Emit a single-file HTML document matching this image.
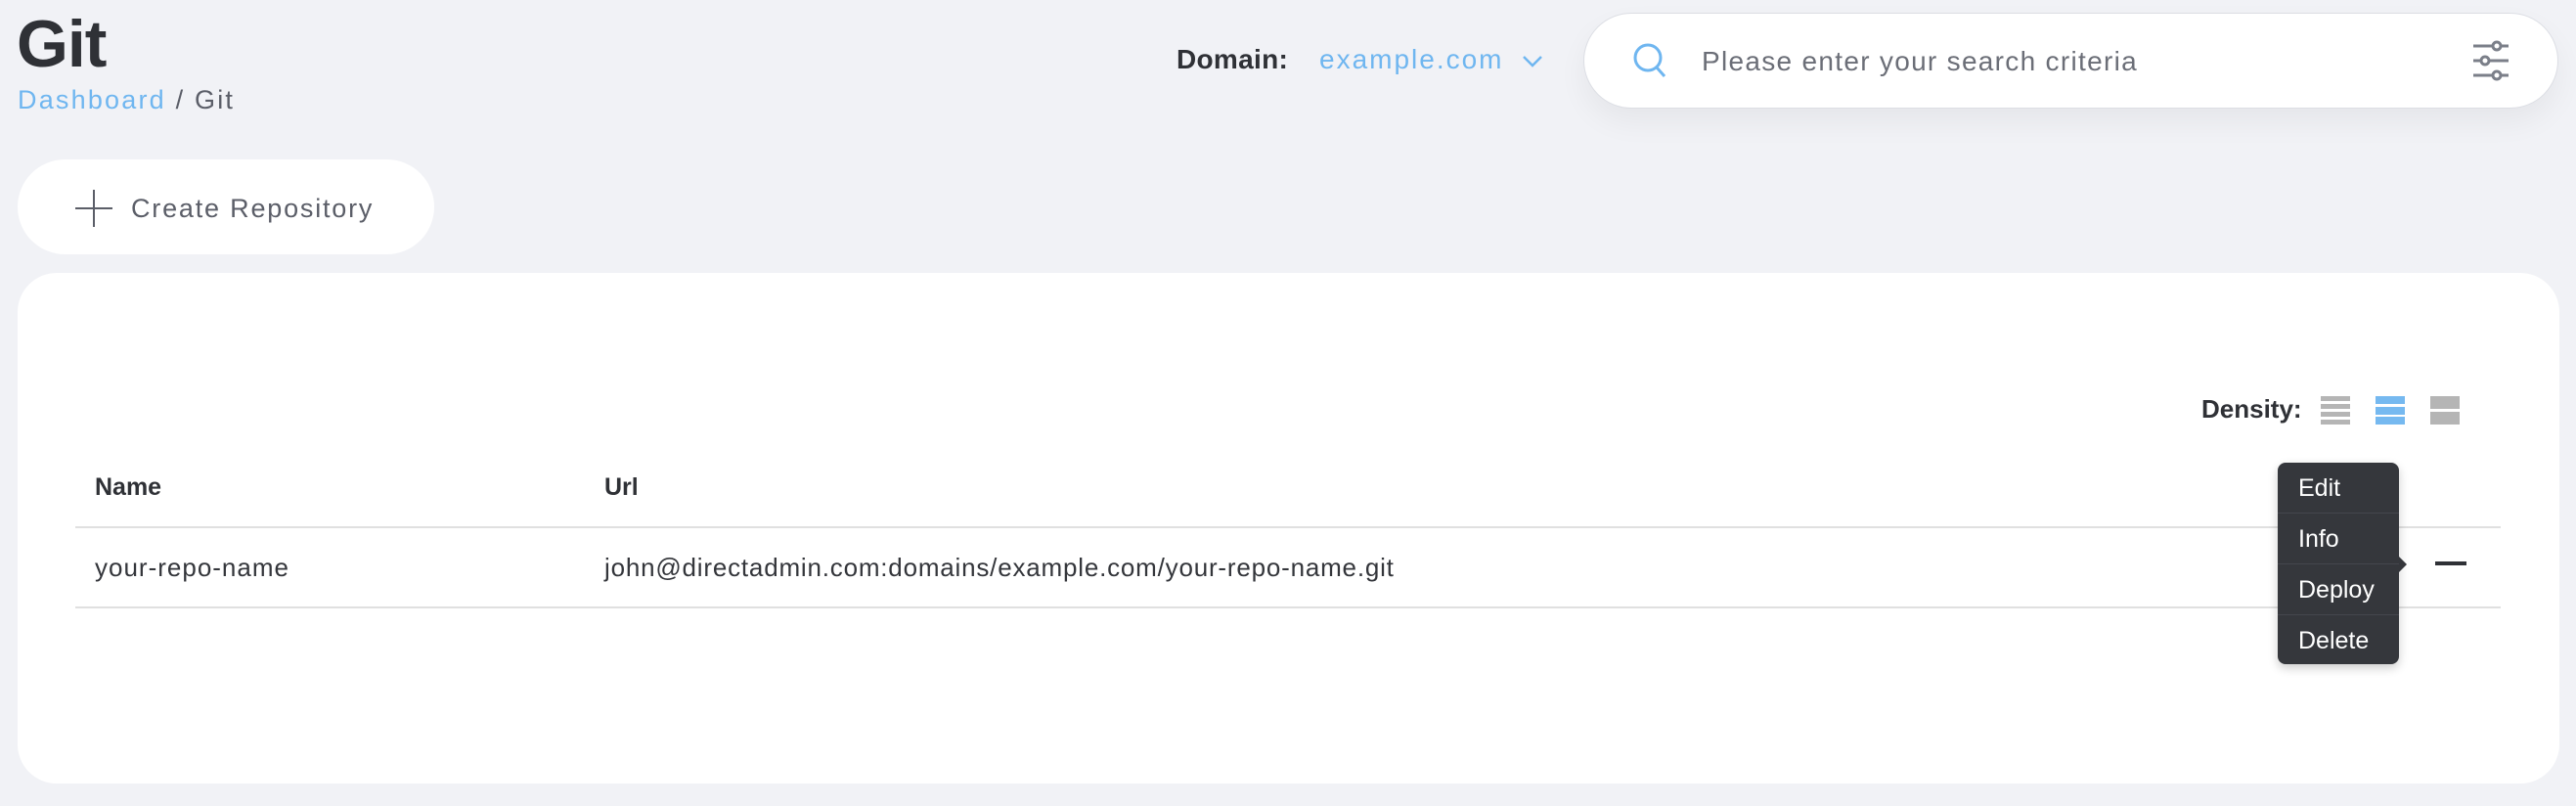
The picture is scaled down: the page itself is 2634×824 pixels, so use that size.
<!DOCTYPE html>
<html><head><meta charset="utf-8"><style>
*{margin:0;padding:0;box-sizing:border-box}
body{width:2634px;height:824px;background:#f1f2f6;font-family:"Liberation Sans",sans-serif;position:relative;overflow:hidden;color:#34363b}
.a{position:absolute;white-space:nowrap}
</style></head><body>
<div class="a" style="left:17px;top:6px;font-size:68px;font-weight:bold;color:#2f3136;letter-spacing:-1px">Git</div>
<div class="a" style="left:18px;top:87px;font-size:27px;letter-spacing:2.2px;color:#5b5e68"><span style="color:#6fb6f0">Dashboard</span> / Git</div>

<div class="a" style="left:1203px;top:45px;font-size:28px;font-weight:bold;color:#2f3136;letter-spacing:0.3px">Domain:</div>
<div class="a" style="left:1349px;top:45px;font-size:28px;color:#6fb6f0;letter-spacing:2px">example.com</div>
<svg class="a" style="left:1556px;top:56px" width="22" height="14" viewBox="0 0 22 14"><path d="M2 2l9 9 9-9" fill="none" stroke="#6fb6f0" stroke-width="2.5"/></svg>

<div class="a" style="left:1619px;top:13px;width:997px;height:98px;background:#fff;border-radius:49px;border:1px solid #dcdee4;box-shadow:0 14px 30px rgba(0,0,0,0.05)"></div>
<svg class="a" style="left:1668px;top:42px" width="38" height="40" viewBox="0 0 38 40"><circle cx="17" cy="17" r="13" fill="none" stroke="#6fb6f0" stroke-width="3"/><path d="M26 27l8 9" stroke="#6fb6f0" stroke-width="3"/></svg>
<div class="a" style="left:1740px;top:47px;font-size:28px;color:#6b6e77;letter-spacing:1.3px">Please enter your search criteria</div>
<svg class="a" style="left:2527px;top:41px" width="40" height="42" viewBox="0 0 40 42"><g stroke="#7b7f89" stroke-width="3" fill="#fff"><path d="M2 6h36M2 21h36M2 36h36"/><circle cx="26" cy="6" r="4"/><circle cx="14" cy="21" r="4"/><circle cx="26" cy="36" r="4"/></g></svg>

<div class="a" style="left:18px;top:163px;width:426px;height:97px;background:#fff;border-radius:49px"></div>
<svg class="a" style="left:77px;top:194px" width="38" height="38"><path d="M19 0v38M0 19h38" stroke="#5b5e68" stroke-width="2"/></svg>
<div class="a" style="left:134px;top:198px;font-size:27px;color:#5b5e68;letter-spacing:1.8px">Create Repository</div>

<div class="a" style="left:18px;top:279px;width:2599px;height:522px;background:#fff;border-radius:40px"></div>
<div class="a" style="left:2251px;top:403px;font-size:26px;font-weight:bold;color:#2f3136">Density:</div>
<svg class="a" style="left:2373px;top:404px" width="160" height="32">
<g fill="#b5b5b5"><rect x="0" y="1" width="30" height="5"/><rect x="0" y="9" width="30" height="5"/><rect x="0" y="17" width="30" height="5"/><rect x="0" y="25" width="30" height="5"/></g>
<g fill="#76b9f0"><rect x="56" y="1" width="30" height="8"/><rect x="56" y="12" width="30" height="8"/><rect x="56" y="22" width="30" height="8"/></g>
<g fill="#b5b5b5"><rect x="112" y="1" width="30" height="13"/><rect x="112" y="17" width="30" height="13"/></g></svg>

<div class="a" style="left:97px;top:484px;font-size:25px;font-weight:bold;color:#2f3136">Name</div>
<div class="a" style="left:618px;top:484px;font-size:25px;font-weight:bold;color:#2f3136">Url</div>
<div class="a" style="left:77px;top:538px;width:2480px;height:2px;background:#e0e0e0"></div>
<div class="a" style="left:97px;top:565px;font-size:26px;color:#34363b;letter-spacing:1px">your-repo-name</div>
<div class="a" style="left:618px;top:565px;font-size:26px;color:#34363b;letter-spacing:0.8px">john@directadmin.com:domains/example.com/your-repo-name.git</div>
<div class="a" style="left:77px;top:620px;width:2480px;height:2px;background:#e0e0e0"></div>
<div class="a" style="left:2490px;top:574px;width:32px;height:4px;background:#2f3136"></div>

<div class="a" style="left:2329px;top:473px;width:124px;height:206px;background:#35373c;border-radius:8px;box-shadow:0 4px 10px rgba(0,0,0,0.2)"></div>
<div class="a" style="left:2451px;top:567px;width:0;height:0;border-top:10px solid transparent;border-bottom:10px solid transparent;border-left:10px solid #35373c"></div>
<div class="a" style="left:2329px;top:524px;width:124px;height:1px;background:#44474d"></div>
<div class="a" style="left:2329px;top:576px;width:124px;height:1px;background:#44474d"></div>
<div class="a" style="left:2329px;top:628px;width:124px;height:1px;background:#44474d"></div>
<div class="a" style="left:2350px;top:485px;font-size:25px;color:#fff">Edit</div>
<div class="a" style="left:2350px;top:537px;font-size:25px;color:#fff">Info</div>
<div class="a" style="left:2350px;top:589px;font-size:25px;color:#fff">Deploy</div>
<div class="a" style="left:2350px;top:641px;font-size:25px;color:#fff">Delete</div>
</body></html>
